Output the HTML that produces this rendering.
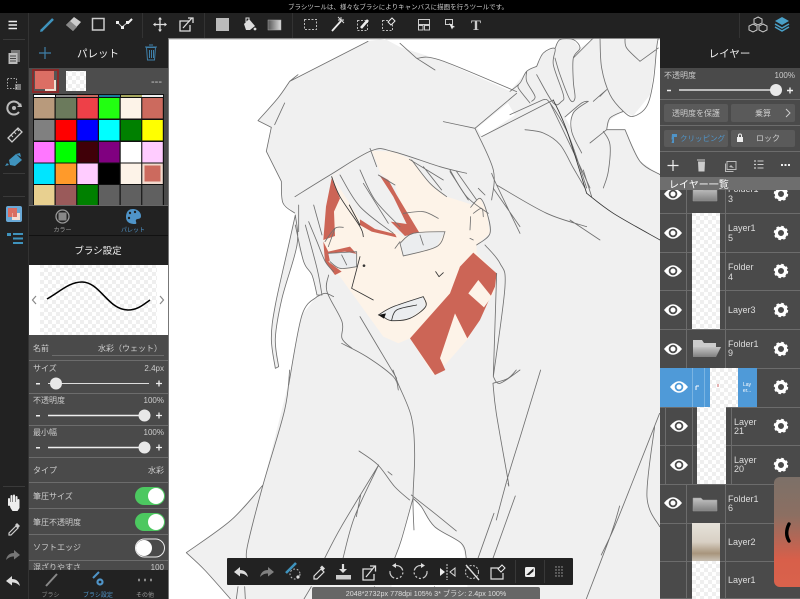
<!DOCTYPE html>
<html lang="ja"><head><meta charset="utf-8"><title>MediBang Paint</title>
<style>
html,body{margin:0;padding:0;background:#222;width:800px;height:599px;overflow:hidden}
svg{display:block;filter:blur(.35px)}
text{font-family:"Liberation Sans","Noto Sans CJK JP",sans-serif;fill:#ccc;font-size:8px}
.m{text-anchor:middle}.r{text-anchor:end}
.l{fill:none;stroke:#707070;stroke-width:2.5;stroke-linejoin:round;stroke-linecap:round}
.d{stroke:#333}
.lay{fill:#ddd;font-size:9px}
</style></head><body>
<svg xmlns="http://www.w3.org/2000/svg" width="800" height="599" viewBox="0 0 800 599">
<defs>
<pattern id="ck" width="8" height="8" patternUnits="userSpaceOnUse"><rect width="8" height="8" fill="#fff"/><rect width="4" height="4" fill="#efefef"/><rect x="4" y="4" width="4" height="4" fill="#efefef"/></pattern>
<linearGradient id="fg" x1="0" y1="0" x2="0" y2="1"><stop offset="0" stop-color="#c4c4c4"/><stop offset="1" stop-color="#808080"/></linearGradient>
<linearGradient id="gr" x1="0" y1="0" x2="1" y2="0"><stop offset="0" stop-color="#555"/><stop offset="1" stop-color="#ddd"/></linearGradient>
<linearGradient id="fl" x1="0" y1="0" x2="0" y2="1"><stop offset="0" stop-color="#7c7068"/><stop offset=".35" stop-color="#8c6f62"/><stop offset=".75" stop-color="#d85f4a"/><stop offset="1" stop-color="#d9624c"/></linearGradient>
<linearGradient id="tx" x1="0" y1="0" x2="0" y2="1"><stop offset="0" stop-color="#e6e2da"/><stop offset=".5" stop-color="#d8d0c4"/><stop offset=".8" stop-color="#a8957c"/><stop offset="1" stop-color="#c8c0b4"/></linearGradient>
<g id="eye"><path d="M-9,0 Q0,-11.500 9,0 Q0,11.500 -9,0Z" fill="#fff"/><circle r="3.400" fill="none" stroke="#4a4a4a" stroke-width="1.800"/></g>
<g id="gear"><circle r="4.600" fill="none" stroke="#fff" stroke-width="3.200"/><circle r="6.200" fill="none" stroke="#fff" stroke-width="2" stroke-dasharray="2.600 2.270"/></g>
<g id="undo"><path d="M-7,0 L-1,-5 V-2 C3,-2 6,0 7,5 C4,2 2,1.500 -1,1.500 V4.500Z" fill="#ddd"/></g>
<g id="fold"><path d="M-12,-6 h8 l2,2 h14 v11 h-24z" fill="url(#fg)" stroke="#999" stroke-width=".5"/></g>
<g id="ofold"><path d="M-12,-9 h9 l2,3 h12 v5 h-23z" fill="#ccc"/><path d="M-12,-2 h8 h20 l-5,10 h-23z" fill="url(#fg)"/></g>
</defs>

<!-- base -->
<rect width="800" height="599" fill="#222"/>
<rect width="800" height="13" fill="#000"/>
<text x="398" y="9" class="m" style="font-size:6.500px" fill="#bbb">ブラシツールは、様々なブラシによりキャンバスに描画を行うツールです。</text>

<!-- CANVAS -->
<rect x="168" y="38" width="492" height="561" fill="#fff"/>
<rect x="168" y="38" width="492" height="1.300" fill="#888"/>
<rect x="168" y="38" width="1" height="561" fill="#777"/>
<path d="M258,121 278,98 290,81 368,41 385,39 400,47 440,60 510,91 527,71 537,66 543,53 555,48 560,40 573,40 580,48 593,39 657,39 657,48 650,95 633,116 623,111 610,120 607,130 625,130 640,161 660,175 660,599 231,599 205,570 186,553 231,520 263,485 288,385 302,315 317,296 312,275 304,262 297,245 295,213 283,203 281,181 266,151 271,127Z" fill="#f0f0f0"/>
<path d="M295,215 289,245 275,305 271,338 275,368 279,367 275,338 282,298 297,245Z" fill="#f0f0f0"/>
<path d="M477,128 508,103 515,115 482,137Z M565,117 577,106 572,113 572,130Z M395,558 413,498 421,507 435,527 461,543 466,558 468,599 390,599Z" fill="#fff"/>

<!-- face colours -->
<g transform="translate(260,130) scale(.3333)">
<path d="M215,140 335,62 400,65 470,95 540,110 640,190 632,235 650,345 650,370 710,430 705,480 625,625 560,700 520,735 450,625 415,640 370,620 240,440 200,400 190,330Z" fill="#fdf3e8"/>
<path d="M218,140 335,62 362,130 405,165 432,250 480,310 440,325 405,305 335,298 300,270Z" fill="#f0f0f0"/>
<path d="M455,90 540,110 620,130 665,190 640,225 560,200 510,160Z" fill="#f0f0f0"/>
<path d="M632,232 660,203 680,245 690,310 650,345 630,300Z" fill="#fdf3e8"/>
<path d="M215,145 198,230 190,330 225,318 222,245 240,205Z" fill="#cc6556"/>
<path d="M190,335 205,365 270,350 290,372 235,375 205,395 245,425 225,435 195,395Z" fill="#cc6556"/>
<path d="M300,268 345,297 405,312 410,322 335,305 300,285Z" fill="#cc6556"/>
<path d="M358,135 385,150 410,195 478,308 435,318 392,275 440,282 400,200Z" fill="#cc6556"/>
<path d="M640,368 600,410 570,490 450,625 525,735 556,720 540,685 585,550 622,625 660,570 705,470 710,430Z" fill="#cc6556"/>
<path d="M625,490 655,450 695,500 672,532Z" fill="#fdf3e8"/>
<path d="M420,340 460,310 555,305 530,350 430,378Z M205,370 255,365 292,372 290,410 240,417 210,395Z" fill="#ebedef"/>
<path d="M355,555 400,530 490,500 497,530 450,565 395,572Z" fill="#ebedef"/>
<!-- face lines -->
<path class="l" d="M105,200 210,135 335,62 400,65 540,110 620,130 M330,55 350,110 M240,135 300,230 400,310 M300,120 345,210 420,290 M355,135 405,165 M310,160 385,280 M455,90 510,160 560,200 M570,125 625,210 M590,125 650,210 M655,175 675,195 M430,250 490,245 535,265 M205,370 290,365 M290,365 290,410 M290,410 240,415 210,395 M420,340 460,310 555,305 M555,305 530,350 430,378 M430,378 420,340 M405,355 420,335 M245,375 260,405 M480,315 490,345 M632,232 660,205 680,245 690,310 650,345 M632,260 630,300 M640,250 665,235 670,260 M630,325 640,330 M245,640 320,680 400,740 415,780 M300,560 410,745 M195,335 225,295 250,292 M225,295 205,350 M710,430 700,740 M700,740 720,760 780,720 M695,130 710,165 780,310 M700,175 780,290 M675,345 720,400 735,470 700,740"/>
<path class="l d" d="M215,140 240,200 300,290 310,320 M268,225 300,285 M300,380 275,475 M275,475 340,510 M527,425 537,440 M537,440 550,428 M355,555 400,530 490,500 M490,500 497,530 450,565 395,572 372,562 M395,570 410,540 470,525"/>
<path d="M355,555 378,550 372,566Z" fill="#111"/>
<circle cx="312" cy="407" r="4" fill="#333"/>
</g>
<!-- hair strip & left hair -->
<g transform="translate(262,205) scale(.3333)">
<path class="l" d="M100,30 80,120 40,300 28,400 40,490 M40,490 50,485 M50,485 40,400 60,280 105,120 100,30 M100,60 125,170 150,210 165,270 M165,270 180,270 M180,270 165,190 130,60 M140,50 165,110 190,170 215,200 M165,275 120,330 80,540 M165,275 190,265 215,275 M200,210 195,260 240,350 240,400 270,430 M110,0 110,80 M155,0 180,90"/>
</g>

<!-- hand & upper right -->
<g transform="translate(510,38) scale(.3333)">
<path class="l" d="M0,160 30,135 50,100 80,85 M30,135 25,150 60,195 M50,100 50,130 75,175 65,190 M80,85 100,45 135,32 130,80 160,170 155,190 130,195 80,110 M135,32 150,5 190,5 210,30 190,60 190,130 195,180 180,185 150,110 135,60 M190,60 250,0 M270,0 275,90 300,170 340,220 370,235 410,205 430,130 440,30 445,0 M345,0 350,30 390,70 M390,70 445,30 M0,230 100,185 M100,185 120,195 175,290 230,450 M120,195 180,320 240,450 M165,237 215,195 235,190 M235,190 190,225 185,280 215,345 M250,190 290,155 M270,175 290,155 M340,220 300,240 290,275 M290,275 240,315 M280,280 300,320 295,400 280,450 M290,275 345,275 M345,275 390,370 450,410 M45,275 100,285 150,320 190,390 225,450"/>
</g>
<!-- hood & upper body -->
<g transform="translate(168,38) scale(.3333)">
<path class="l" d="M380,525 345,495 340,430 M340,430 295,340 M295,340 310,268 M310,268 270,248 M270,248 330,180 365,130 M365,130 600,10 M350,195 320,260 M365,130 390,110"/>
</g>
<g transform="translate(400,0) scale(.3333)">
<path class="l" d="M0,130 50,175 M50,175 120,180 350,275 M50,175 105,210 M130,365 225,385 M225,385 350,280 M225,385 280,510 275,600 M245,410 460,300 M28,478 130,540 M70,500 125,570 M150,510 200,590 265,640 M290,555 440,640 560,680 M510,660 600,720 M550,510 575,590"/>
<path class="l d" d="M460,300 500,390 560,580 M560,580 640,640 780,720"/>
</g>
<!-- lower body -->
<g transform="translate(168,370) scale(.3333)">
<path class="l" d="M675,0 690,40 730,140 740,250 735,385 738,480 M735,385 700,510 680,565 M573,243 630,285 680,350 725,390 M632,285 560,440 525,565 M632,285 520,470 470,565 M578,375 565,440 M660,305 672,315 M730,375 800,430 865,483 M735,385 760,410 800,470 880,520 895,565 M975,40 985,130 1020,330 1020,340 M1118,0 1060,190 1020,320 985,450 M1042,378 975,565 M978,430 930,565 M365,0 350,120 285,345 240,520 235,565 M285,345 190,450 55,548 M55,548 110,600 190,690 M1475,130 1400,320 1340,470 1300,555 M1355,408 1330,490 1255,687 M1460,170 1437,380 1475,470 M975,40 1020,25 1045,0 M210,650 205,687 M230,650 232,687 M430,650 408,687 M620,650 610,687 M800,650 795,687"/>
</g>

<!-- TOP TOOLBAR -->
<rect y="13" width="800" height="25" fill="#222"/>
<path d="M28.500,13V38M142.500,13V38M204.500,13V38M292.500,13V38M739.500,13V38" stroke="#333"/>
<path d="M8.500,21.500H17M8.500,25H17M8.500,28.500H17" stroke="#eee" stroke-width="1.500"/>
<path d="M41,31 L53,19" stroke="#3f93bd" stroke-width="2.600"/><path d="M40,32l3,-1 -2,-2z" fill="#3f93bd"/>
<path d="M66,25 L74,17 L81,22 L73,31Z" fill="#ccc"/><path d="M66,25 L70,21 L77,27 L73,31Z" fill="#888"/>
<rect x="92.500" y="18.500" width="11.500" height="11.500" fill="none" stroke="#ccc" stroke-width="1.500"/>
<path d="M117,22 L122,27 L127,23 L132,19" stroke="#ccc" stroke-width="1" fill="none"/><path d="M116,21h3v3h-3zM121,26h3v3h-3zM126,21h3v3h-3z" fill="#eee"/><path d="M128,23l4,-4" stroke="#eee" stroke-width="2"/>
<path d="M160,18V31M154,24.500H166" stroke="#ddd" stroke-width="1.300"/><path d="M160,17l-2,2.500h4zM160,32l-2,-2.500h4zM153,24.500l2.500,-2v4zM167,24.500l-2.500,-2v4z" fill="#ddd"/>
<path d="M190,21H180V31H190V25M183,28L192,18M188,18h5v5" fill="none" stroke="#ddd" stroke-width="1.300"/>
<rect x="216" y="18" width="13" height="13" fill="#bbb"/>
<path d="M244,24 L249,19 L255,26 L250,30 H246Z" fill="#ddd"/><path d="M246,22 V18 H249 V21" fill="none" stroke="#ddd"/><circle cx="255" cy="29" r="1.400" fill="#ddd"/>
<rect x="268" y="20" width="13" height="10" fill="url(#gr)" stroke="#aaa" stroke-width=".5"/>
<rect x="304.500" y="19.500" width="12" height="10" fill="none" stroke="#bbb" stroke-dasharray="2 1.500"/>
<path d="M332,31 L341,21" stroke="#eee" stroke-width="1.800"/><path d="M341,17v3M338,20h6M338,17l6,6" stroke="#ddd" stroke-width=".9"/>
<rect x="357.500" y="20.500" width="10" height="10" fill="none" stroke="#bbb" stroke-dasharray="2 1.500"/><path d="M361,28 L368,20" stroke="#eee" stroke-width="2.600"/>
<rect x="382.500" y="20.500" width="10" height="10" fill="none" stroke="#bbb" stroke-dasharray="2 1.500"/><path d="M388,22l4,-4 3,3 -4,4z" fill="#222" stroke="#eee"/>
<path d="M418.500,19.500h11v5h-11zM418.500,25.500h4.500v4.500h-4.500zM424.500,25.500h5v4.500h-5z" fill="none" stroke="#ccc"/>
<path d="M445.500,19.500h7v5h-7z" fill="none" stroke="#ccc"/><path d="M449,23 l6,4 -2,.5 -1,2z" fill="#eee"/>
<text x="476" y="30" class="m" style="font-family:'Liberation Serif',serif;font-size:15px;font-weight:bold;fill:#ccc">T</text>
<path d="M758,17l4,2v4l-4,2 -4,-2v-4zM753,24l4,2v4l-4,2 -4,-2v-4zM763,24l4,2v4l-4,2 -4,-2v-4z" fill="none" stroke="#ccc"/>
<path d="M782,17l7,4 -7,4 -7,-4z" fill="#4aa0c8"/><path d="M775,24l7,4 7,-4M775,27l7,4 7,-4" fill="none" stroke="#4aa0c8" stroke-width="1.500"/>

<!-- LEFT RAIL -->
<rect x="28" y="38" width="1" height="561" fill="#333"/>
<path d="M3,39.500H25M3,173.500H25M3,196.500H25M3,486.500H25" stroke="#3a3a3a"/>
<rect x="11" y="50" width="9" height="12" fill="#777"/><rect x="8.500" y="53" width="9" height="11" fill="#bbb"/><path d="M10,56h6M10,58.500h6M10,61h6" stroke="#444"/>
<rect x="7.500" y="78.500" width="9" height="10" fill="none" stroke="#aaa" stroke-dasharray="1.500 1.500"/><path d="M15,85h6M15,87h6M15,89h6" stroke="#ccc"/>
<path d="M19,112 A6.500,6.500 0 1 1 20,106" fill="none" stroke="#bbb" stroke-width="2"/><circle cx="14" cy="108" r="2" fill="#bbb"/><path d="M17,107l5,0 -1,-4z" fill="#bbb"/>
<path d="M8,138 L18,128 L22,132 L12,142Z" fill="none" stroke="#ccc" stroke-width="1.300"/><path d="M11,135l2,2M14,132l2,2M17,129l2,2" stroke="#ccc"/>
<path d="M9,160 L16,154 L22,160 L15,166 L10,165Z" fill="#3f93bd"/><path d="M16,154l4,-1 1,4z" fill="#3f93bd"/><path d="M7,163 L5,166 9,165" fill="#3f93bd"/>
<rect x="6" y="206" width="16" height="16" rx="2" fill="#69a8d6"/><rect x="8" y="208" width="9" height="9" fill="#d96d62"/><rect x="12" y="213" width="8" height="7" fill="#f3ded5"/><rect x="12.500" y="213" width="4.500" height="4" fill="#d96d62"/>
<path d="M7,233h4v3h-4z" fill="#3f93bd"/><path d="M13,234h10M13,238.500h10M13,243h10" stroke="#3f93bd" stroke-width="2"/>
<path d="M9,505 V499 M11.500,507 V496 M14,507 V495.500 M16.500,507 V497 M18.500,507 V500" stroke="#eee" stroke-width="2" stroke-linecap="round"/><path d="M9,503l1.500,5 2,3h5l2,-3v-6h-10z" fill="#eee"/>
<path d="M9,533 L16,526 L18,528 L11,535 L9,535Z" fill="none" stroke="#ccc" stroke-width="1.200"/><path d="M15,525l2,-2 3,3 -2,2z" fill="#ccc"/>
<use href="#undo" transform="translate(13,555) scale(-1,1)" opacity=".45"/>
<use href="#undo" transform="translate(13,581)"/>

<!-- LEFT PANEL palette -->
<rect x="29" y="39" width="139" height="29" fill="#222"/>
<path d="M45,47V59M39,53H51" stroke="#3f7fa8" stroke-width="1.200"/>
<text x="98" y="57" class="m" style="font-size:10.500px;fill:#eee">パレット</text>
<path d="M146.500,47.500h9l-1,12.500h-7zM145,47h12M149,45h4M149.500,50v8M151.500,50v8M153.500,50v8" fill="none" stroke="#3f7fa8"/>
<rect x="29" y="68" width="139" height="26" fill="#4d4d4d"/>
<rect x="32" y="69" width="27" height="24" fill="#8a2a2a"/><rect x="34" y="71" width="23" height="20" fill="#555"/><rect x="35" y="71" width="19" height="18" fill="#dc6e64"/><rect x="45" y="80" width="11" height="11" fill="#f1dfd2"/><rect x="45" y="80" width="9" height="9" fill="#dc6e64"/>
<rect x="66" y="71" width="20" height="20" fill="url(#ck)"/>
<text x="162" y="85" class="r" style="font-size:11px">---</text>
<rect x="29" y="94" width="139" height="111" fill="#4a4a4a"/>
<rect x="33" y="94" width="131" height="111" fill="#111"/>
<g>
<rect x="34" y="95" width="21" height="2" fill="#fff"/><rect x="56" y="95" width="21" height="2" fill="#888"/><rect x="77" y="95" width="21" height="2" fill="#c86a60"/><rect x="99" y="95" width="21" height="2" fill="#1a7a9a"/><rect x="121" y="95" width="21" height="2" fill="#a8a860"/><rect x="142" y="95" width="21" height="2" fill="#eee"/>
<rect x="34" y="98" width="20.500" height="20.500" fill="#b89a7c"/><rect x="55.700" y="98" width="20.500" height="20.500" fill="#6b7a5c"/><rect x="77.300" y="98" width="20.500" height="20.500" fill="#ee4048"/><rect x="99" y="98" width="20.500" height="20.500" fill="#22ff11"/><rect x="120.700" y="98" width="20.500" height="20.500" fill="#fdf3e8"/><rect x="142.300" y="98" width="20.500" height="20.500" fill="#cc6a5e"/>
<rect x="34" y="120" width="20.500" height="20.500" fill="#808080"/><rect x="55.700" y="120" width="20.500" height="20.500" fill="#f00"/><rect x="77.300" y="120" width="20.500" height="20.500" fill="#00f"/><rect x="99" y="120" width="20.500" height="20.500" fill="#0ff"/><rect x="120.700" y="120" width="20.500" height="20.500" fill="#008000"/><rect x="142.300" y="120" width="20.500" height="20.500" fill="#ff0"/>
<rect x="34" y="142" width="20.500" height="20.500" fill="#ff77ff"/><rect x="55.700" y="142" width="20.500" height="20.500" fill="#0f0"/><rect x="77.300" y="142" width="20.500" height="20.500" fill="#400008"/><rect x="99" y="142" width="20.500" height="20.500" fill="#800080"/><rect x="120.700" y="142" width="20.500" height="20.500" fill="#fff"/><rect x="142.300" y="142" width="20.500" height="20.500" fill="#ffccff"/>
<rect x="34" y="163.500" width="20.500" height="20.500" fill="#00e5ff"/><rect x="55.700" y="163.500" width="20.500" height="20.500" fill="#ff9a2a"/><rect x="77.300" y="163.500" width="20.500" height="20.500" fill="#ffccff"/><rect x="99" y="163.500" width="20.500" height="20.500" fill="#000"/><rect x="120.700" y="163.500" width="20.500" height="20.500" fill="#fdf3e8"/><rect x="142.300" y="163.500" width="20.500" height="20.500" fill="#f0d8cc"/><rect x="144.500" y="165.500" width="16" height="16" fill="#cc6a5e"/>
<rect x="34" y="185" width="20.500" height="20" fill="#e8d090"/><rect x="55.700" y="185" width="20.500" height="20" fill="#9a5a5a"/><rect x="77.300" y="185" width="20.500" height="20" fill="#008000"/><rect x="99" y="185" width="20.500" height="20" fill="#606060"/><rect x="120.700" y="185" width="20.500" height="20" fill="#606060"/><rect x="142.300" y="185" width="20.500" height="20" fill="#606060"/>
</g>
<rect x="29" y="205" width="139" height="31" fill="#222"/><rect x="29" y="205" width="139" height="1" fill="#666"/><rect x="29" y="235" width="139" height="1" fill="#111"/>
<circle cx="62.500" cy="216.500" r="6.500" fill="none" stroke="#999" stroke-width="1.300"/><rect x="58.500" y="212.500" width="8" height="8" rx="1" fill="#888"/>
<text x="62.500" y="232" class="m" style="font-size:6px;fill:#999">カラー</text>
<path d="M133,209 C126,209 126,216 126,217 C126,224 133,224 135,224 C138,224 135,221 136,220 C137,218 141,220 141,216 C141,212 137,209 133,209Z" fill="#4f94c8"/><circle cx="130" cy="213" r="1.200" fill="#222"/><circle cx="135" cy="212" r="1.200" fill="#222"/><circle cx="129" cy="218" r="1.200" fill="#222"/>
<text x="133" y="232" class="m" style="font-size:6px;fill:#4f94c8">パレット</text>

<!-- brush settings -->
<rect x="29" y="236" width="139" height="29" fill="#222"/>
<text x="98" y="254" class="m" style="font-size:9.500px;fill:#eee">ブラシ設定</text>
<rect x="29" y="265" width="139" height="70" fill="#fff"/><rect x="40" y="265" width="117" height="70" fill="url(#ck)"/>
<path d="M47,299 C62,290 70,282 82,282 C100,282 108,310 128,310 C138,310 144,304 150,300" fill="none" stroke="#000" stroke-width="1.500"/>
<path d="M36,296 L32.500,300 L36,304M160,296 L163.500,300 L160,304" fill="none" stroke="#888" stroke-width="1.200"/>
<rect x="29" y="335" width="139" height="235" fill="#4a4a4a"/>
<path d="M52,355.500H164M29,360.500H168M29,393.500H168M29,425.500H168M29,457.500H168M29,482.500H168M29,508.500H168M29,534.500H168M29,560.500H168" stroke="#6c6c6c"/>
<text x="33" y="351">名前</text><text x="162" y="351" class="r">水彩（ウェット）</text>
<text x="33" y="371">サイズ</text><text x="164" y="371" class="r">2.4px</text>
<text x="33" y="403">不透明度</text><text x="164" y="403" class="r">100%</text>
<text x="33" y="435">最小幅</text><text x="164" y="435" class="r">100%</text>
<text x="33" y="473">タイプ</text><text x="164" y="473" class="r">水彩</text>
<text x="33" y="499">筆圧サイズ</text><text x="33" y="525">筆圧不透明度</text><text x="33" y="550">ソフトエッジ</text>
<text x="33" y="570">混ざりやすさ</text><text x="164" y="570" class="r">100</text>
<g fill="#eee"><rect x="36" y="383" width="4" height="1.500"/><rect x="36" y="415" width="4" height="1.500"/><rect x="36" y="447" width="4" height="1.500"/>
<path d="M156,383.500h6M159,380.500v6M156,415.500h6M159,412.500v6M156,447.500h6M159,444.500v6" stroke="#eee" stroke-width="1.300" fill="none"/></g>
<path d="M48,383.500H149" stroke="#ddd"/><path d="M48,415.500H144" stroke="#eee" stroke-width="1.400"/><path d="M48,447.500H144" stroke="#eee" stroke-width="1.400"/>
<circle cx="56" cy="383.500" r="6" fill="#e8e8e8"/><circle cx="144.500" cy="415.500" r="6" fill="#e8e8e8"/><circle cx="144.500" cy="447.500" r="6" fill="#e8e8e8"/>
<rect x="135" y="487" width="30" height="18" rx="9" fill="#4cc860"/><circle cx="156" cy="496" r="8" fill="#fff"/>
<rect x="135" y="513" width="30" height="18" rx="9" fill="#4cc860"/><circle cx="156" cy="522" r="8" fill="#fff"/>
<rect x="135.500" y="539" width="29" height="18" rx="9" fill="#4a4a4a" stroke="#eee"/><circle cx="144" cy="548" r="8" fill="#fff"/>
<rect x="29" y="570" width="139" height="29" fill="#222"/>
<path d="M46,586 L57,574" stroke="#888" stroke-width="2"/><text x="50.500" y="597" class="m" style="font-size:6px;fill:#888">ブラシ</text>
<path d="M93,578 L99,572" stroke="#4f94c8" stroke-width="2"/><circle cx="100" cy="582" r="2.500" fill="none" stroke="#4f94c8" stroke-width="2.200"/><text x="98" y="597" class="m" style="font-size:6px;fill:#4f94c8">ブラシ設定</text>
<path d="M138,580h2M144,580h2M150,580h2" stroke="#888" stroke-width="2.500"/><text x="145" y="597" class="m" style="font-size:6px;fill:#999">その他</text>

<!-- RIGHT PANEL -->
<rect x="660" y="39" width="140" height="560" fill="#4a4a4a"/>
<rect x="660" y="39" width="140" height="29" fill="#222"/>
<text x="729.500" y="57" class="m" style="font-size:10.500px;fill:#eee">レイヤー</text>
<text x="664" y="78">不透明度</text><text x="795" y="78" class="r">100%</text>
<path d="M667,90.500h4" stroke="#eee" stroke-width="1.500"/><path d="M787,90.500h6M790,87.500v6" stroke="#eee" stroke-width="1.400"/>
<path d="M679,90H776" stroke="#fff" stroke-width="1.300"/>
<circle cx="776" cy="90" r="6" fill="#e8e8e8"/>
<path d="M660,99.500H800M660,125.500H800M660,151.500H800" stroke="#6c6c6c"/>
<rect x="664" y="104" width="64" height="18" rx="2" fill="#5a5a5a"/><rect x="731" y="104" width="64" height="18" rx="2" fill="#5a5a5a"/>
<text x="696" y="116" class="m">透明度を保護</text><text x="763" y="116" class="m">乗算</text>
<path d="M786,109 L790,113 L786,117" fill="none" stroke="#ccc"/>
<rect x="664" y="130" width="64" height="17" rx="2" fill="#5a5a5a"/><rect x="731" y="130" width="64" height="17" rx="2" fill="#5a5a5a"/>
<path d="M672,134h5v3h-3v6h-2.500l1,-3.500h-1z" fill="#4f94c8"/>
<text x="680" y="141" style="font-size:7.500px;fill:#4f94c8">クリッピング</text>
<rect x="737" y="137" width="6" height="5" fill="#eee"/><path d="M738.500,137v-1.500a1.500,1.500 0 0 1 3,0v1.500" fill="none" stroke="#eee"/>
<text x="768" y="141" class="m">ロック</text>
<path d="M673,160v11M667.500,165.500h11" stroke="#eee" stroke-width="1.200"/>
<path d="M697,160h8" stroke="#ccc"/><path d="M698,161.500h7l-.5,10h-6z" fill="#ccc"/>
<path d="M727,161.500h9v8h-9z" fill="none" stroke="#bbb"/><path d="M725.500,163.500v8h8" fill="none" stroke="#bbb"/><path d="M729,167l2,-2 3,3z" fill="#bbb"/>
<path d="M754,161h2M754,164.500h2M754,168h2" stroke="#ccc" stroke-width="1.200"/><path d="M757.500,161h6M757.500,164.500h6M757.500,168h6" stroke="#ccc"/>
<path d="M781,165h2M784.500,165h2M788,165h2" stroke="#eee" stroke-width="2"/>

<!-- layers -->
<g stroke="#6c6c6c" fill="none">
<path d="M660,213.500H800M660,252.500H800M660,290.500H800M660,329.500H800M660,368.500H800M660,407.500H800M660,445.500H800M660,484.500H800M660,523.500H800M660,561.500H800M660,598.500H800"/>
<path d="M686.500,190V368M725.500,190V368M686.500,484V599M725.500,484V599M665.500,407V484M692.500,407V484M731.500,407V484"/>
</g>
<use href="#fold" transform="translate(705,194)"/>
<rect x="692" y="213" width="28" height="116" fill="url(#ck)"/>
<use href="#ofold" transform="translate(705,349)"/>
<rect x="660" y="368" width="97" height="39" fill="#4f9ad8"/>
<path d="M692.500,368V407M704.500,368V407" stroke="#7ab4e2"/>
<rect x="710" y="368" width="28" height="39" fill="url(#ck)"/>
<path d="M718,384v3" stroke="#c66"/>
<path d="M696,386h3M696,386v4" stroke="#fff" stroke-width="1"/>
<text x="747" y="386" class="m" style="font-size:5px;fill:#fff">Lay</text><text x="747" y="392" class="m" style="font-size:5px;fill:#fff">er...</text>
<rect x="697" y="407" width="29" height="77" fill="url(#ck)"/>
<use href="#fold" transform="translate(705,504)"/>
<rect x="692" y="523" width="28" height="38" fill="url(#tx)"/>
<rect x="692" y="561" width="28" height="38" fill="url(#ck)"/>
<use href="#eye" transform="translate(673,194)"/><use href="#eye" transform="translate(673,233)"/><use href="#eye" transform="translate(673,271)"/><use href="#eye" transform="translate(673,310)"/><use href="#eye" transform="translate(673,349)"/>
<g transform="translate(679,387)"><path d="M-9,0 Q0,-11.500 9,0 Q0,11.500 -9,0Z" fill="#fff"/><circle r="3.400" fill="none" stroke="#4f9ad8" stroke-width="1.800"/></g>
<use href="#eye" transform="translate(679,426)"/><use href="#eye" transform="translate(679,465)"/><use href="#eye" transform="translate(673,503)"/>
<use href="#gear" transform="translate(781,194)"/><use href="#gear" transform="translate(781,233)"/><use href="#gear" transform="translate(781,271)"/><use href="#gear" transform="translate(781,310)"/><use href="#gear" transform="translate(781,349)"/><use href="#gear" transform="translate(781,387)"/><use href="#gear" transform="translate(781,426)"/><use href="#gear" transform="translate(781,465)"/>
<text x="728" y="192" class="lay">Folder1</text><text x="728" y="202" class="lay">3</text>
<text x="728" y="231" class="lay">Layer1</text><text x="728" y="241" class="lay">5</text>
<text x="728" y="270" class="lay">Folder</text><text x="728" y="280" class="lay">4</text>
<text x="728" y="313" class="lay">Layer3</text>
<text x="728" y="347" class="lay">Folder1</text><text x="728" y="356" class="lay">9</text>
<text x="734" y="425" class="lay">Layer</text><text x="734" y="434" class="lay">21</text>
<text x="734" y="463" class="lay">Layer</text><text x="734" y="472" class="lay">20</text>
<text x="728" y="502" class="lay">Folder1</text><text x="728" y="511" class="lay">6</text>
<text x="728" y="545" class="lay">Layer2</text>
<text x="728" y="583" class="lay">Layer1</text>
<rect x="660" y="177" width="140" height="13" fill="#6e6e6e"/>
<text x="669" y="188" style="font-size:10px;fill:#fff">レイヤー一覧</text>
<rect x="660" y="176" width="140" height="1" fill="#4a4a4a"/>

<!-- floating slide tab -->
<path d="M800,477H780a6,6 0 0 0 -6,6V581a6,6 0 0 0 6,6H800Z" fill="url(#fl)"/>
<path d="M789,524 C786,530 786,536 789,541" fill="none" stroke="#000" stroke-width="3.400" stroke-linecap="round"/>

<!-- BOTTOM FLOATING TOOLBAR -->
<rect x="227" y="558" width="346" height="27" rx="1" fill="#222"/>
<use href="#undo" transform="translate(241,572)"/>
<use href="#undo" transform="translate(267,572) scale(-1,1)" opacity=".5"/>
<path d="M286,573 L296,563" stroke="#3f93bd" stroke-width="2.600"/><circle cx="295" cy="574" r="5" fill="none" stroke="#bbb" stroke-dasharray="1.800 1.800"/><circle cx="298" cy="577" r="1.600" fill="#ddd"/>
<path d="M314,576 L321,569 L324,572 L317,579 L314,579Z" fill="none" stroke="#ddd" stroke-width="1.200"/><path d="M320,567.500l2,-2 3,3 -2,2z" fill="#ddd"/>
<path d="M343,564v6" stroke="#ddd" stroke-width="2.200"/><path d="M339,569h8l-4,4z" fill="#ddd"/><rect x="336" y="575" width="15" height="4.500" fill="#ccc"/>
<path d="M373,569H363V580H374V574M366,577L375,566M370,566h5.500v5.500" fill="none" stroke="#ddd" stroke-width="1.300"/>
<path d="M396,565.500 A6.500,6.500 0 1 1 390,571" fill="none" stroke="#ccc" stroke-width="1.200" stroke-dasharray="9 2 2 2 2 2 2 2 30"/><path d="M396,563v5l-4,-2.500z" fill="#ddd"/>
<path d="M421,565.500 A6.500,6.500 0 1 0 427,571" fill="none" stroke="#ccc" stroke-width="1.200" stroke-dasharray="9 2 2 2 2 2 2 2 30"/><path d="M421,563v5l4,-2.500z" fill="#ddd"/>
<path d="M447,564V580" stroke="#ccc" stroke-dasharray="2 1"/><path d="M440,568v8l5,-4z" fill="#eee"/><path d="M455,568v8l-5,-4z" fill="none" stroke="#ddd"/>
<circle cx="472" cy="572" r="6.500" fill="none" stroke="#ccc" stroke-dasharray="2 1.500"/><path d="M466,565L479,580" stroke="#ddd" stroke-width="1.400"/>
<path d="M499,568H491V579H503V573" fill="none" stroke="#ddd" stroke-width="1.200"/><path d="M498,569l4,-4 3,3 -4,4z" fill="#222" stroke="#eee"/>
<path d="M515.500,560V583M544.500,560V583" stroke="#383838"/>
<rect x="525" y="567" width="10" height="10" rx="1.500" fill="#eee"/><path d="M527.500,574.500 L533,569.500 V571 L529,574.500Z" fill="#222" stroke="#222"/>
<g fill="#aaa"><circle cx="556" cy="567" r=".7"/><circle cx="559" cy="567" r=".7"/><circle cx="562" cy="567" r=".7"/><circle cx="556" cy="570" r=".7"/><circle cx="559" cy="570" r=".7"/><circle cx="562" cy="570" r=".7"/><circle cx="556" cy="573" r=".7"/><circle cx="559" cy="573" r=".7"/><circle cx="562" cy="573" r=".7"/><circle cx="556" cy="576" r=".7"/><circle cx="559" cy="576" r=".7"/><circle cx="562" cy="576" r=".7"/></g>
<path d="M312,599V589a2,2 0 0 1 2,-2H538a2,2 0 0 1 2,2V599Z" fill="#666"/>
<text x="426" y="596" class="m" style="font-size:7.200px;fill:#ddd">2048*2732px 778dpi 105% 3* ブラシ: 2.4px 100%</text>
</svg>
<script>
document.querySelectorAll('path.l').forEach(function(p){
  var out='';
  p.getAttribute('d').split('M').forEach(function(s){
    s=s.trim(); if(!s) return;
    var n=s.split(/[\s,]+/).map(Number),pts=[];
    for(var i=0;i+1<n.length;i+=2) pts.push([n[i],n[i+1]]);
    out+='M'+pts[0][0]+','+pts[0][1];
    for(var j=0;j<pts.length-1;j++){
      var a=pts[j-1]||pts[j],b=pts[j],c=pts[j+1],d=pts[j+2]||c;
      out+='C'+(b[0]+(c[0]-a[0])/6)+','+(b[1]+(c[1]-a[1])/6)+' '+(c[0]-(d[0]-b[0])/6)+','+(c[1]-(d[1]-b[1])/6)+' '+c[0]+','+c[1];
    }
  });
  p.setAttribute('d',out);
});
</script>
</body></html>
